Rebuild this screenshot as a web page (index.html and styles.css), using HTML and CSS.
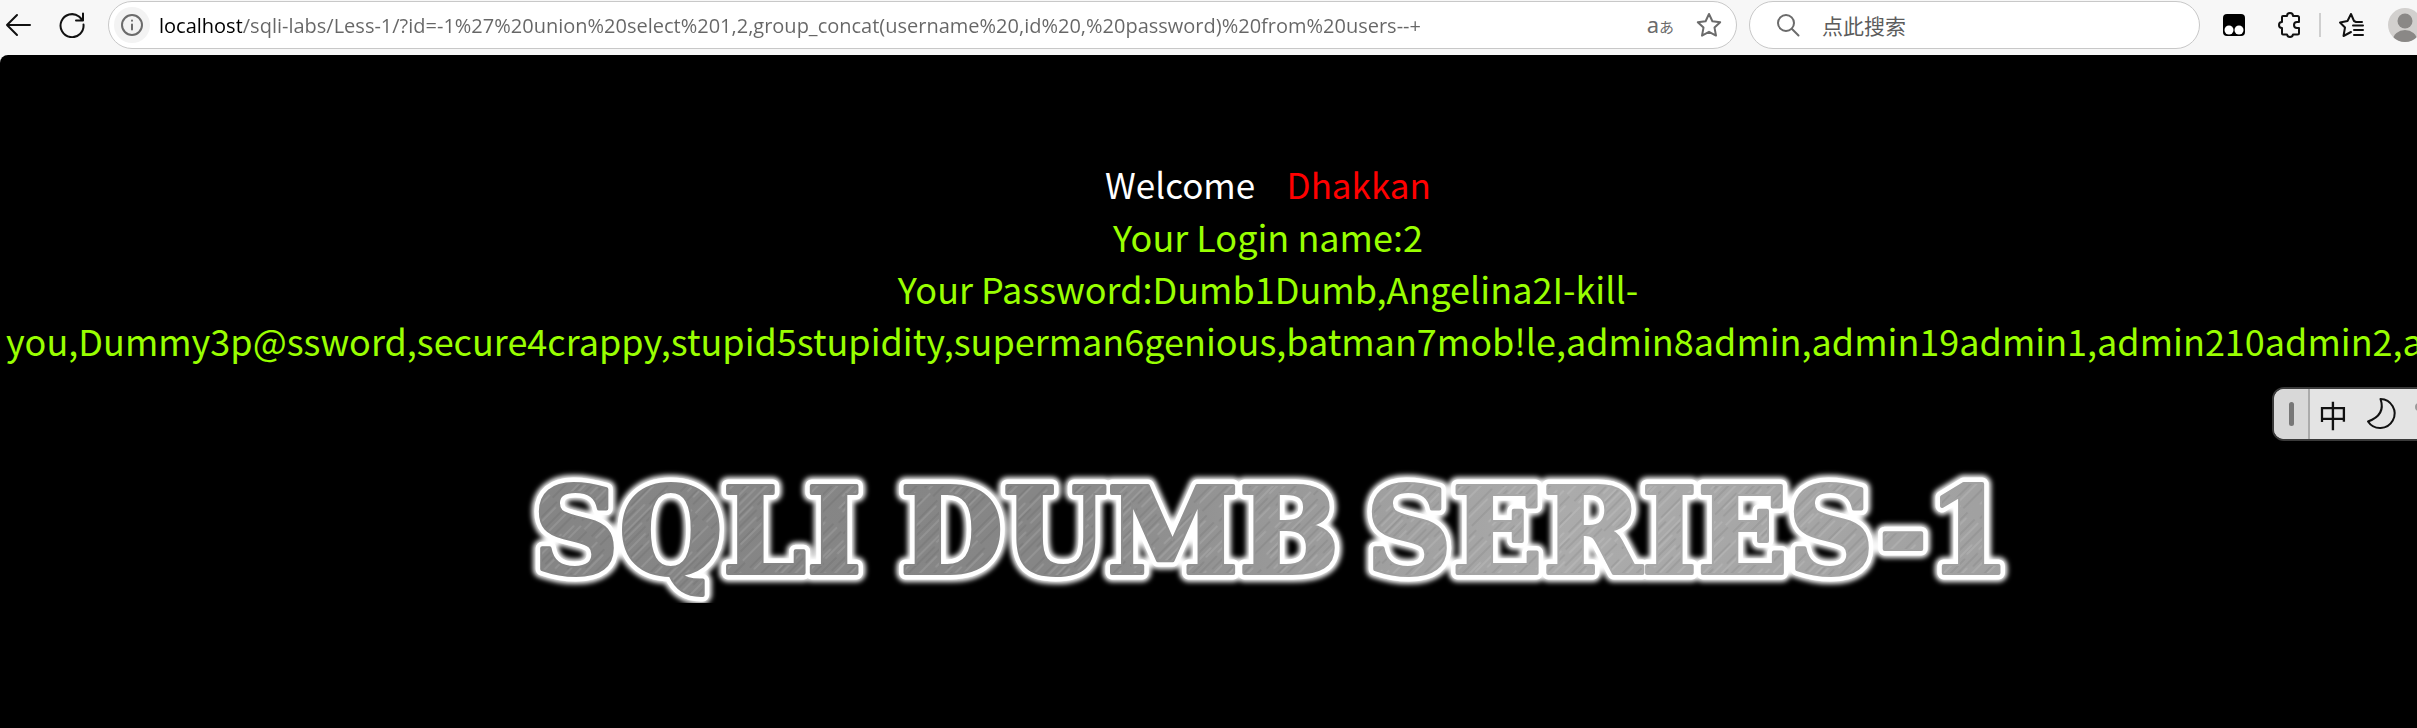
FILE: index.html
```html
<!DOCTYPE html>
<html lang="zh-CN">
<head>
<meta charset="utf-8">
<title>Less-1 **Error Based- String**</title>
<link rel="stylesheet" href="styles.css">
</head>
<body>
<header class="toolbar">
  <button class="tool" aria-label="Back"><svg width="26" height="26" viewBox="0 0 26 26"><path d="M25 13H2M12 3 2 13l10 10"/></svg></button>
  <button class="tool reload" aria-label="Refresh"><svg width="26" height="26" viewBox="0 0 26 26"><path d="M24.500 12.500A11.500 11.500 0 1 1 20 4.500L24 8.500M24 1.500v7h-7"/></svg></button>
  <div class="pill address">
    <button class="info" aria-label="Site information"><svg width="22" height="22" viewBox="0 0 22 22"><circle cx="11" cy="11" r="10"/><path d="M11 10.500v5M11 6.500v.2"/></svg></button>
    <input class="url" type="text" aria-label="Address" value="localhost/sqli-labs/Less-1/?id=-1%27%20union%20select%201,2,group_concat(username%20,id%20,%20password)%20from%20users--+">
    <button class="translate" aria-label="Translate">a<small>あ</small></button>
    <button class="tool muted" aria-label="Add to favorites"><svg width="26" height="26" viewBox="0 0 26 26"><path d="m13 2 3.400 7.200 7.800 1-5.700 5.400 1.500 8L13 19.800 6 23.600l1.500-8L1.800 10.200l7.800-1z"/></svg></button>
  </div>
  <div class="pill search">
    <svg class="muted" width="24" height="24" viewBox="0 0 24 24"><circle cx="10" cy="10" r="8"/><path d="m16 16 6.500 6.500"/></svg>
    <input class="query" type="text" aria-label="搜索" placeholder="点此搜索">
  </div>
  <nav class="actions">
    <button class="tool" aria-label="Tampermonkey"><svg width="24" height="24" viewBox="0 0 24 24"><rect class="ink" x="1" y="1" width="22" height="22" rx="4"/><circle class="hole" cx="7" cy="17" r="4.500"/><circle class="hole" cx="17" cy="17" r="4.500"/></svg></button>
    <button class="tool" aria-label="Extensions"><svg width="24" height="26" viewBox="0 0 24 26"><path d="M4 5q0-1 1-1h4q0-3 3-3t3 3h4.500q1.500 0 1.500 1.500V10h-2q-3 0-3 3t3 3h2v5q0 1.500-1.500 1.500H15q-.5 2.500-3 2.500t-3-2.500H5q-1 0-1-1V16Q1 16 1 13t3-3z"/></svg></button>
    <span class="divider"></span>
    <button class="tool" aria-label="Favorites"><svg width="26" height="26" viewBox="0 0 26 26"><path d="M24 10h-6L16 9 13 2 9.500 9 2 10.500l5 5L5.500 24l7.500-4M15 13.500h10M16 18h9M16 23h9"/></svg></button>
    <button class="tool" aria-label="Profile"><svg width="36" height="36" viewBox="0 0 36 36"><clipPath id="face"><circle cx="18" cy="18" r="17"/></clipPath><g clip-path="url(#face)"><path class="skin" d="M0 0h36v36H0z"/><circle class="person" cx="18" cy="14" r="7.500"/><ellipse class="person" cx="18" cy="33" rx="12" ry="10"/></g></svg></button>
  </nav>
</header>

<main class="page">
  <div class="message">
    <p class="welcome">Welcome&nbsp;&nbsp;&nbsp; <span class="name">Dhakkan</span></p>
    <p>Your Login name:2</p>
    <p>Your Password:Dumb1Dumb,Angelina2I-kill-<br>you,Dummy3p@ssword,secure4crappy,stupid5stupidity,superman6genious,batman7mob!le,admin8admin,admin19admin1,admin210admin2,admin311admin3</p>
  </div>
  <svg class="banner" width="1500" height="140" viewBox="0 0 1500 140" role="img" aria-label="SQLI DUMB SERIES-1">
    <defs>
      <linearGradient id="steel" gradientUnits="userSpaceOnUse" x1="0" y1="0" x2="1500" y2="0">
        <stop offset="0" stop-color="#858585"/><stop offset=".35" stop-color="#868686"/>
        <stop offset=".5" stop-color="#989898"/><stop offset=".7" stop-color="#ababab"/><stop offset="1" stop-color="#a0a0a0"/>
      </linearGradient>
      <filter id="glow" x="-5%" y="-20%" width="110%" height="140%"><feGaussianBlur stdDeviation="2.500"/></filter>
      <pattern id="brush" width="67" height="90" patternUnits="userSpaceOnUse" patternTransform="rotate(45)">
        <path class="scratch light" d="M3 0v40M6 50v30M14 20v60M17 5v25M22 0v18M27 40v50M34 10v38M41 60v28M45 0v50M52 30v34M58 5v70M63 45v30"/>
        <path class="scratch dark" d="M1 45v40M9 0v52M12 60v30M19 35v50M24 22v30M30 0v34M37 50v40M43 10v30M49 40v50M55 0v26M60 30v42M65 0v40"/>
      </pattern>
      <g id="words">
        <text x="15" y="110">SQLI</text>
        <text x="382" y="110">DUMB</text>
        <text x="848" y="110">SERIES-1</text>
      </g>
    </defs>
    <use class="halo" href="#words" filter="url(#glow)"/>
    <use class="rim" href="#words"/>
    <use class="metal" href="#words"/>
    <use class="grain" href="#words"/>
  </svg>
</main>

<aside class="ime" aria-label="输入法">
  <span class="grip"></span>
  <button class="lang">中</button>
  <button class="moon" aria-label="半角"><svg width="32" height="34" viewBox="0 0 32 34"><path d="M14.500 2Q20 18 2 24.500A14.500 14.500 0 1 0 14.500 2z"/></svg></button>
  <button class="punct" aria-label="标点"><svg width="12" height="34" viewBox="0 0 12 34"><circle cx="4" cy="10" r="3"/></svg></button>
</aside>
</body>
</html>
```
FILE: styles.css
```css
* { box-sizing: border-box; }

body {
  margin: 0;
  min-height: 100vh;
  display: flex;
  flex-direction: column;
  overflow: hidden;
  background: #f7f7f7;
  font-family: "Noto Sans", "Noto Sans CJK SC", sans-serif;
}

button, input {
  margin: 0;
  padding: 0;
  border: 0;
  background: none;
  color: inherit;
  font: inherit;
}

svg {
  display: block;
  flex: none;
  fill: none;
  stroke: #111;
  stroke-width: 2;
  stroke-linejoin: round;
  stroke-linecap: round;
}

/* Browser toolbar */
.toolbar {
  display: flex;
  align-items: center;
  height: 55px;
  margin-right: -6px;
  padding: 0 0 5px 5px;
}

.tool { flex: none; }
.reload { margin: 0 23px 0 28px; }

.pill {
  display: flex;
  align-items: center;
  height: 48px;
  border: 1px solid #c8c8c8;
  border-radius: 24px;
  background: #fff;
}

.address {
  flex: 1;
  min-width: 0;
  margin-right: 12px;
  padding: 0 14px 0 5px;
}

.info {
  display: grid;
  place-items: center;
  width: 36px;
  height: 36px;
  margin-right: 9px;
  border-radius: 50%;
  background: #f3f3f3;
}

.info svg, .muted, .muted svg { stroke: #6b6b6b; }

/* Host name dark, the rest of the address grey */
.url {
  flex: 1;
  min-width: 0;
  height: 40px;
  font-family: "Open Sans", sans-serif;
  font-size: 20px;
  color: transparent;
  background: linear-gradient(90deg, #000 83px, #666 83px);
  -webkit-background-clip: text;
  background-clip: text;
}

.translate {
  display: flex;
  align-items: baseline;
  margin-right: 22px;
  color: #6b6b6b;
  font-size: 22px;
  line-height: 32px;
}

.translate small { font-size: 15px; }

.search {
  width: 451px;
  padding: 0 26px;
}

.query {
  flex: 1;
  min-width: 0;
  height: 40px;
  margin-left: 22px;
  font-family: "Noto Sans CJK SC", sans-serif;
  font-size: 21px;
}

.query::placeholder { color: #5c5c5c; opacity: 1; }

.actions {
  display: flex;
  align-items: center;
  margin-left: 22px;
}

.actions .tool + .tool { margin-left: 32px; }
.actions .tool:last-child { margin-left: 23px; }

.divider {
  width: 2px;
  height: 24px;
  margin: 0 17px;
  background: #cfcfcf;
}

.ink { fill: #000; stroke: none; }
.hole { fill: #fff; stroke: none; }
.skin { fill: #d2d0ce; stroke: none; }
.person { fill: #8a8886; stroke: none; }

/* Page content runs past the right edge of the window */
.page {
  flex: 1;
  margin-right: -119px;
  padding: 103px 6px 0;
  border-top-left-radius: 8px;
  background: #000;
}

.message {
  font-family: "Noto Sans CJK SC", sans-serif;
  font-size: 36px;
  line-height: 52px;
  text-align: center;
  white-space: nowrap;
  color: #9f0;
}

.message p { margin: 0; }
.message .welcome { color: #fff; font-size: 35px; }
.message .name { color: #f00; }

.banner {
  margin: 97px auto 0;
  font-family: "DejaVu Serif", serif;
  font-size: 119px;
  font-weight: 700;
}

.halo { stroke: #fff; stroke-width: 18; }
.rim { fill: #fff; stroke: #fff; stroke-width: 13; }
.metal { fill: url(#steel); stroke: url(#steel); stroke-width: 4; }
.grain { fill: url(#brush); stroke: none; }
.scratch { stroke-width: 1; }
.light { stroke: #fff; stroke-opacity: .22; }
.dark { stroke: #000; stroke-opacity: .12; }

/* Floating input-method bar */
.ime {
  position: fixed;
  top: 387px;
  right: -12px;
  display: flex;
  align-items: center;
  height: 54px;
  border: 2px solid #3a3a3a;
  border-radius: 12px 0 0 12px;
  overflow: hidden;
  background: #e4e4e4;
  color: #111;
}

.grip {
  display: grid;
  place-items: center;
  width: 36px;
  height: 100%;
  border-right: 2px solid #ababab;
  background: #d8d8d8;
}

.grip::before {
  content: "";
  width: 5px;
  height: 24px;
  border-radius: 3px;
  background: #777;
}

.lang {
  margin-left: 8px;
  font-family: "Noto Sans CJK SC", sans-serif;
  font-size: 30px;
  line-height: 48px;
}

.moon { margin-left: 18px; }
.punct { margin-left: 17px; }
.punct circle { stroke: #999; }
```
